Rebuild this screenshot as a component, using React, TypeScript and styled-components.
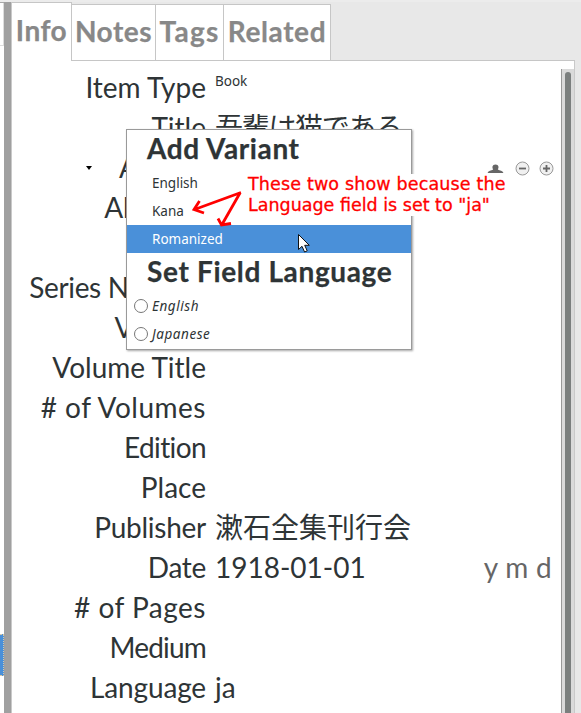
import React from 'react';
import styled, { createGlobalStyle } from 'styled-components';

const GlobalStyle = createGlobalStyle`
  * { box-sizing: border-box; }
  body {
    margin: 0;
    background: #e8e8e8;
    overflow: hidden;
    font-variant-ligatures: none;
  }
`;

const LARGE = `28px Lato, "Noto Sans CJK JP", sans-serif`;
const SMALL = `13.5px "Noto Sans", sans-serif`;

const Window = styled.div`
  position: relative;
  display: flex;
  width: 581px;
  height: 713px;
  overflow: hidden;
  border-top: 2px solid #ececec;
  background: #e8e8e8;
  color: #2e3436;
`;

const ItemList = styled.div`
  display: flex;
  flex-direction: column;
  width: 4px;
  background: #fff;
  border-top: 1px solid #a9a9a9;
`;

const ListHeader = styled.div`
  height: 43px;
  border-right: 1px solid #ddd;
  border-bottom: 1px solid #ddd;
`;

const SelectedItem = styled.div`
  height: 42px;
  margin-top: 588px;
  background: #4a90d9;
  border: 1px dotted #d8c9a8;
  border-left: 0;
`;

const Splitter = styled.div`
  width: 8px;
  background: #a0a0a0;
  border-right: 1px solid #c9c9c9;
`;

const Pane = styled.div`
  display: flex;
  flex-direction: column;
  width: 563px;
`;

const TabBar = styled.div`
  display: flex;
  align-items: flex-end;
  height: 59px;
`;

const Tab = styled.div<{ $width: number; $active?: boolean; $spacing?: number }>`
  display: flex;
  justify-content: center;
  width: ${p => p.$width}px;
  height: ${p => (p.$active ? 59 : 57)}px;
  padding-top: ${p => (p.$active ? 9 : 8)}px;
  background: #fff;
  border-top: 1px solid #c6c6c6;
  border-right: 1px solid #c6c6c6;
  border-bottom: ${p => (p.$active ? '0' : '1px solid #c6c6c6')};
  color: #888;
  font: bold ${LARGE};
  line-height: 36px;
  letter-spacing: ${p => p.$spacing ?? 0}px;
  -webkit-text-stroke: 0.25px currentColor;
  white-space: nowrap;
`;

const TabFill = styled.div`
  flex: 1;
  height: 1px;
  background: #c6c6c6;
`;

const Panel = styled.div`
  display: flex;
  flex: 1;
  background: #fff;
  border-right: 1px solid #c9c9c9;
`;

const Fields = styled.div`
  width: 549px;
  padding-top: 7px;
`;

const Row = styled.div`
  display: flex;
  align-items: center;
  height: 40px;
  font: ${LARGE};
  line-height: 38px;
  white-space: nowrap;
`;

const Label = styled.div<{ $spacing: number }>`
  width: 194px;
  height: 40px;
  text-align: right;
  letter-spacing: ${p => p.$spacing}px;
`;

const Value = styled.div<{ $spacing?: number }>`
  height: 40px;
  margin-left: 9px;
  letter-spacing: ${p => p.$spacing ?? 0}px;
`;

const SmallValue = styled(Value)`
  font: ${SMALL};
  line-height: 26px;
`;

const DateHint = styled.div`
  height: 40px;
  margin-left: auto;
  padding-right: 9px;
  color: #666;
  letter-spacing: 0.3px;
`;

const Collapse = styled.div`
  width: 0;
  height: 0;
  margin: 0 -81px 0 74px;
  border: solid transparent;
  border-width: 4px 3.5px 0;
  border-top-color: #000;
`;

const Actions = styled.div`
  display: flex;
  align-items: center;
  gap: 9px;
  margin-left: auto;
  padding-right: 7px;
`;

const Icon = styled.svg`
  display: block;
`;

const PersonIcon = styled(Icon)`
  margin-right: 2px;
`;

const ScrollTrack = styled.div`
  flex: 1;
  margin-top: 8px;
  padding: 3px 3px 0;
  background: #dadada;
  border-left: 1px solid #999;
`;

const ScrollThumb = styled.div`
  width: 6px;
  height: 100%;
  background: #7b7f7e;
  border-radius: 3px 3px 0 0;
`;

const Menu = styled.div`
  position: absolute;
  left: 126px;
  top: 127px;
  width: 286px;
  height: 221px;
  background: #fff;
  border: 1px solid #9a9a9a;
  box-shadow: 1px 1px 2px rgba(0, 0, 0, 0.35);
`;

const MenuHeading = styled.div<{ $spacing: number }>`
  height: 39px;
  padding-left: 20px;
  font: bold ${LARGE};
  line-height: 36px;
  letter-spacing: ${p => p.$spacing}px;
  -webkit-text-stroke: 0.25px currentColor;
  white-space: nowrap;
`;

const MenuItem = styled.div<{ $selected?: boolean }>`
  height: 28px;
  padding-left: 25px;
  font: ${SMALL};
  line-height: 28px;
  color: ${p => (p.$selected ? '#fff' : 'inherit')};
  background: ${p => (p.$selected ? '#4a90d9' : 'transparent')};
`;

const RadioItem = styled.div`
  display: flex;
  align-items: center;
  gap: 4px;
  height: 28px;
  padding-left: 7px;
  font: italic ${SMALL};
  letter-spacing: 0.55px;
`;

const Radio = styled.span`
  width: 14px;
  height: 14px;
  border: 1px solid #777;
  border-radius: 50%;
`;

const Note = styled.div`
  position: absolute;
  left: 246px;
  top: 172px;
  width: 263px;
  height: 42px;
  padding-left: 2px;
  background: #fff;
  color: #f00;
  font: 17.5px "DejaVu Sans", sans-serif;
  line-height: 21px;
  -webkit-text-stroke: 0.3px #f00;
  white-space: nowrap;
`;

const NoteLine = styled.div<{ $spacing: number }>`
  letter-spacing: ${p => p.$spacing}px;
`;

const Overlay = styled.svg<{ $x: number; $y: number }>`
  position: absolute;
  left: ${p => p.$x}px;
  top: ${p => p.$y}px;
`;

function RoundButton({ plus }: { plus?: boolean }) {
  return (
    <Icon width="15" height="15" viewBox="0 0 15 15">
      <circle cx="7.5" cy="7.5" r="6.5" fill="#f0f0f0" stroke="#999" />
      <path d={plus ? 'M4 7.5h7M7.5 4v7' : 'M4 7.5h7'} stroke="#666" strokeWidth="1.8" />
    </Icon>
  );
}

const fields: { label: string; spacing?: number; value?: string; valueSpacing?: number; kind?: string }[] = [
  { label: 'Item Type', value: 'Book', kind: 'small' },
  { label: 'Title', value: '吾輩は猫である', valueSpacing: -1.3 },
  { label: 'Author', kind: 'creator' },
  { label: 'Abstract', spacing: -0.3 },
  { label: 'Series', spacing: -0.3 },
  { label: 'Series Number', spacing: -0.35 },
  { label: 'Volume', spacing: -0.2 },
  { label: 'Volume Title' },
  { label: '# of Volumes', spacing: 0.5 },
  { label: 'Edition', spacing: -0.6 },
  { label: 'Place' },
  { label: 'Publisher', spacing: -0.25, value: '漱石全集刊行会' },
  { label: 'Date', spacing: -0.3, value: '1918-01-01', kind: 'date' },
  { label: '# of Pages', spacing: 0.5 },
  { label: 'Medium', spacing: -0.8 },
  { label: 'Language', spacing: -0.15, value: 'ja' },
];

export default function App() {
  return (
    <>
      <GlobalStyle />
      <Window>
        <ItemList>
          <ListHeader />
          <SelectedItem />
        </ItemList>
        <Splitter />
        <Pane>
          <TabBar>
            <Tab $width={60} $active $spacing={0.5}>Info</Tab>
            <Tab $width={84} $spacing={0.5}>Notes</Tab>
            <Tab $width={68} $spacing={1.2}>Tags</Tab>
            <Tab $width={107} $spacing={0.6}>Related</Tab>
            <TabFill />
          </TabBar>
          <Panel>
            <Fields>
              {fields.map(f => (
                <Row key={f.label}>
                  {f.kind === 'creator' && <Collapse />}
                  <Label $spacing={f.spacing ?? 0}>{f.label}</Label>
                  {f.kind === 'small' && <SmallValue>{f.value}</SmallValue>}
                  {f.kind !== 'small' && f.value && <Value $spacing={f.valueSpacing}>{f.value}</Value>}
                  {f.kind === 'date' && <DateHint>y m d</DateHint>}
                  {f.kind === 'creator' && (
                    <Actions>
                      <PersonIcon width="17" height="9" viewBox="0 0 17 9">
                        <path d="M0.5 9C1.5 6.8 4 6.6 6.2 5.6C5 3.8 5 0.5 8.5 0.5S12 3.8 10.8 5.6C13 6.6 15.5 6.8 16.5 9Z" fill="#666" />
                      </PersonIcon>
                      <RoundButton />
                      <RoundButton plus />
                    </Actions>
                  )}
                </Row>
              ))}
            </Fields>
            <ScrollTrack>
              <ScrollThumb />
            </ScrollTrack>
          </Panel>
        </Pane>

        <Menu>
          <MenuHeading $spacing={0.6}>Add Variant</MenuHeading>
          <MenuItem>English</MenuItem>
          <MenuItem>Kana</MenuItem>
          <MenuItem $selected>Romanized</MenuItem>
          <MenuHeading $spacing={0.65}>Set Field Language</MenuHeading>
          <RadioItem><Radio />English</RadioItem>
          <RadioItem><Radio />Japanese</RadioItem>
        </Menu>

        <Note>
          <NoteLine $spacing={0.15}>These two show because the</NoteLine>
          <NoteLine $spacing={0}>Language field is set to "ja"</NoteLine>
        </Note>
        <Overlay $x={190} $y={186} width="54" height="40" fill="none" stroke="#f00" strokeWidth="2.8">
          <path d="M51 4.500L4.500 21.500M9.500 13L4 21.500L14 25M50 5L32 36.500M28 30.500L31.500 37L41 35.500" />
        </Overlay>
        <Overlay $x={297} $y={231} width="15" height="21">
          <path d="M1.500 1.500V16.500L5 13.300L7.600 19L10.200 17.800L7.700 12.300H12.300Z" fill="#fff" stroke="#111" />
        </Overlay>
      </Window>
    </>
  );
}
